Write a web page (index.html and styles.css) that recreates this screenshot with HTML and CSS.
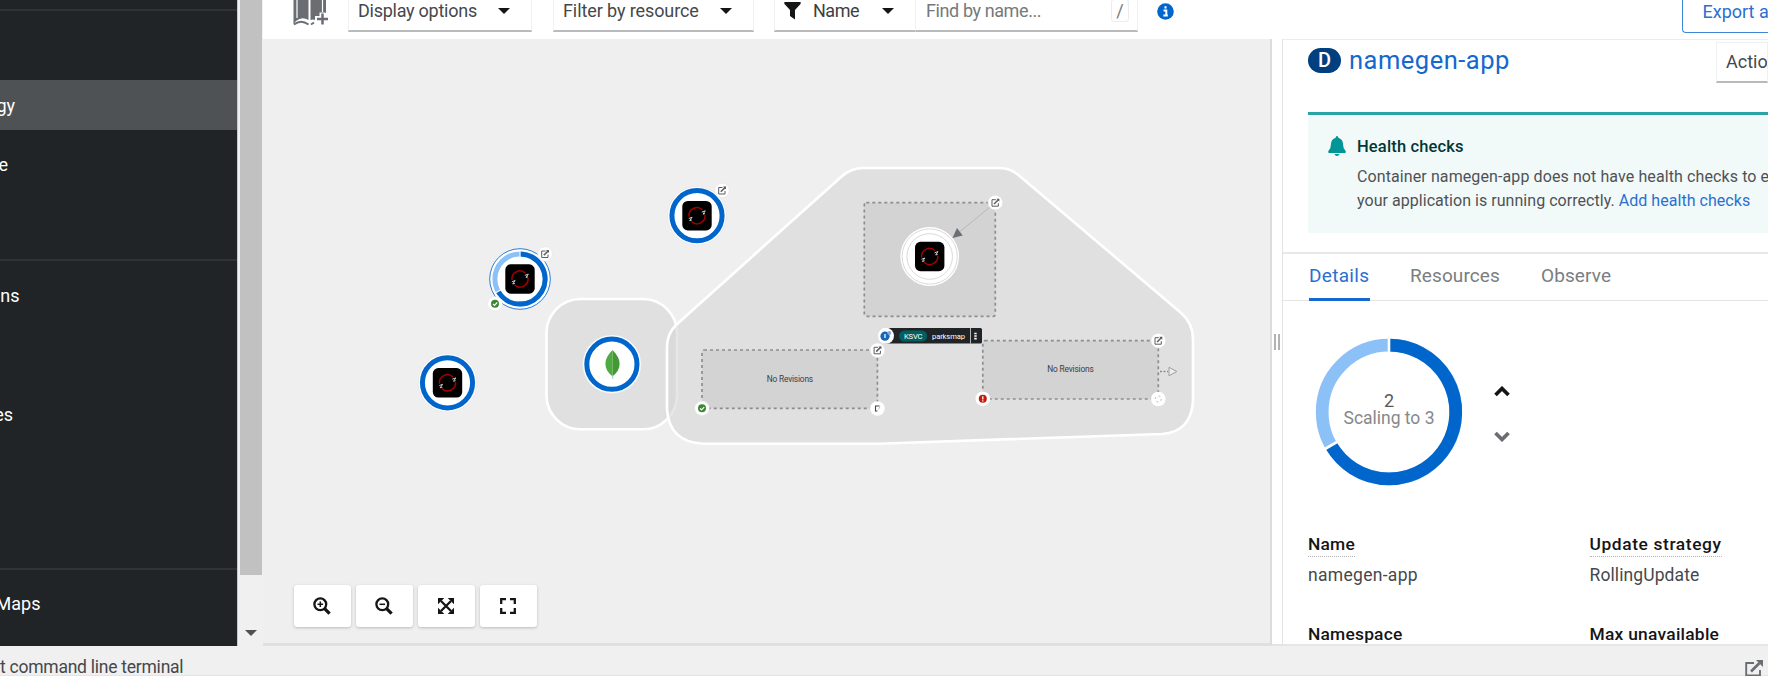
FILE: index.html
```html
<!DOCTYPE html>
<html lang="en">
<head>
<meta charset="utf-8">
<title>Topology</title>
<link rel="stylesheet" href="styles.css">
</head>
<body>
<div class="app">
  <div class="main">
    <nav class="sidebar">
      <div class="nav-group nav-first"></div>
      <div class="nav-group nav-group-top">
        <div class="nav-item active"><span class="w15">gy</span></div>
        <div class="nav-item gap"><span class="w8">e</span></div>
      </div>
      <div class="nav-group nav-group-mid">
        <div class="nav-item"><span class="w20">ns</span></div>
        <div class="nav-item far"><span class="w13">es</span></div>
      </div>
      <div class="nav-group nav-group-end">
        <div class="nav-item"><span class="w40">Maps</span></div>
      </div>
    </nav>
    <div class="scrollbar">
      <div class="thumb"></div>
      <div class="arrow"></div>
    </div>
    <div class="content">
      <header class="toolbar">
        <svg class="catalog" width="35" height="34" viewBox="0 0 35 34">
          <path d="M1 0H12Q15 1 15.500 3V28Q9 24 3 29L.5 32.500V0Z" fill="#6a6e73"/>
          <path d="M17.500 3Q18 1 21 0H33V21H27V24H22V28Q20 27 17.500 28Z" fill="#6a6e73"/>
          <path d="M4 0V26M29.500 0V20" stroke="#fff" stroke-width="1.200"/>
          <path d="M1 32.500Q8 27 15.500 32.500M18 32.500L21 30.500" stroke="#6a6e73" stroke-width="1.800" fill="none"/>
          <path d="M29.500 20.500V33.500M23 27H35" stroke="#fff" stroke-width="6"/>
          <path d="M29.500 21.500V32.500M24 27H35" stroke="#6a6e73" stroke-width="2.500"/>
        </svg>
        <div class="select select-display"><span class="t-display">Display options</span><i class="caret"></i></div>
        <div class="select select-filter"><span class="t-filter">Filter by resource</span><i class="caret"></i></div>
        <div class="select select-name">
          <svg width="17" height="18" viewBox="0 0 17 18"><path d="M.5 0H16.500Q17 1 16.500 2L11 8V17.500L6 14V8L.5 2Q0 1 .5 0Z" fill="#151515"/></svg>
          <span class="t-name">Name</span><i class="caret"></i>
        </div>
        <div class="search"><span class="t-find">Find by name...</span><kbd>/</kbd></div>
        <svg class="info" width="17" height="17" viewBox="0 0 17 17"><circle cx="8.500" cy="8.500" r="8.300" fill="#06c"/><path d="M8.500 3.200V5.600M6.500 7.400H9.300V12M6.300 12.500H10.800" stroke="#fff" stroke-width="2" fill="none"/></svg>
        <div class="export"><span>Export ap</span></div>
      </header>
      <div class="workspace">
        <section class="canvas">
          <svg class="graph" width="1007" height="607" viewBox="263 39 1007 607">
            <defs>
              <g id="shift">
                <rect x="-14.700" y="-14.700" width="29.400" height="29.400" rx="5.500" fill="#000"/>
                <path d="M-8 1A8 8 0 0 1 5.500-5.800M8-1A8 8 0 0 1-5.500 5.800" fill="none" stroke="#a30000" stroke-width="1.500"/>
                <path d="M4.800-3.600L8.300-4.900L6-1.500L8-2.200M-8.200 2.800L-4.900 1.500L-7.300 5L-5.100 4.300" fill="none" stroke="#ccc" stroke-width="1"/>
              </g>
              <g id="ring">
                <circle r="29.300" fill="#fff" stroke="#e2e2e2" stroke-width=".6"/>
                <circle r="25.100" fill="#fff" stroke="#06c" stroke-width="5"/>
              </g>
              <g id="edit">
                <circle r="7.300" fill="#fff" stroke="#e0e0e0" stroke-width=".5"/>
                <path d="M.5-3H-3.300V3.500H3V.5" fill="none" stroke="#5b5e61" stroke-width="1"/>
                <path d="M-1.200 1.300L3.500-3.400" stroke="#5b5e61" stroke-width="1.500"/>
                <path d="M1-3.900H4V-1Z" fill="#5b5e61"/>
              </g>
              <g id="ok">
                <circle r="7.300" fill="#fff" stroke="#e0e0e0" stroke-width=".5"/>
                <circle r="4" fill="#3e8635"/>
                <path d="M-2 .1L-.5 1.600L2.200-1.200" fill="none" stroke="#fff" stroke-width="1.200"/>
              </g>
            </defs>

            <rect x="546.500" y="299" width="130.500" height="130.300" rx="34" fill="#e0e0e0" stroke="#fff" stroke-width="2.600"/>
            <path d="M676 325L841 177Q851 168 863 168H1000Q1010 168 1019 175.500L1180 312Q1193 323 1193 339V401Q1191 432 1162 434L878 443.700H703Q669 442 667 409V347Q667 334 676 325Z" fill="#d6d6d6" fill-opacity=".6" stroke="#fff" stroke-width="2.600"/>

            <g class="revision">
              <rect x="864.300" y="202.700" width="131" height="113.600" rx="2"/>
              <rect x="702" y="350" width="175.400" height="58.300" rx="2"/>
              <rect x="982.800" y="340.700" width="175.500" height="58.300" rx="2"/>
            </g>
            <text class="rev-text" x="766.700" y="381.500" textLength="46.500">No Revisions</text>
            <text class="rev-text" x="1047.300" y="372.300" textLength="46.500">No Revisions</text>

            <use href="#ring" x="697" y="215.700"/><use href="#shift" x="697" y="215.700"/><use href="#edit" x="722" y="190.500"/>
            <g transform="translate(520 279)">
              <circle r="30.300" fill="#fff" stroke="#2b7fd3"/>
              <circle r="25.100" fill="#fff" stroke="#8bc1f7" stroke-width="5"/>
              <path d="M.4-25.100A25.100 25.100 0 1 1-21.500 13" fill="none" stroke="#06c" stroke-width="5"/>
              <path d="M0-22V-28M-18.800 10.600L-24.300 13.700" stroke="#fff" stroke-width="1"/>
              <use href="#shift"/><use href="#edit" x="25" y="-25"/><use href="#ok" x="-25" y="24.700"/>
            </g>
            <use href="#ring" x="447.500" y="382.800"/><use href="#shift" x="447.500" y="382.800"/>
            <use href="#ring" x="611.900" y="364.200"/>
            <path d="M612.500 350C603 359 603 369 612.500 376.500Z" fill="#4faa41"/>
            <path d="M612.500 350C622 359 622 369 612.500 376.500Z" fill="#439934"/>
            <path d="M612.700 375V379" stroke="#b8c4c2"/>

            <g transform="translate(929.700 256.500)">
              <circle r="29.400" fill="#fff"/>
              <circle r="27.600" fill="none" stroke="#dadada"/>
              <circle r="22.800" fill="none" stroke="#dadada"/>
              <use href="#shift"/>
            </g>
            <path d="M990 207L957 234" stroke="#b8b8b8"/>
            <path d="M952.500 238L957 228L962.700 235.500Z" fill="#6a6e73"/>
            <use href="#edit" x="995.300" y="202.700"/>
            <use href="#edit" x="877.400" y="350.300"/>
            <use href="#edit" x="1158.300" y="340.700"/>
            <use href="#ok" x="702" y="408.300"/>
            <g fill="#fff"><circle cx="982.800" cy="398.700" r="7.300"/><circle cx="1158.300" cy="399" r="7.300"/><circle cx="877.400" cy="408.500" r="7.300"/></g>
            <circle cx="982.800" cy="398.700" r="4" fill="#c9190b"/>
            <path d="M982.800 396.200V399.500M982.800 400.200V401.500" stroke="#fff" stroke-width="1.300"/>
            <circle cx="1158.300" cy="399" r="3" fill="none" stroke="#aaa" stroke-width=".9" stroke-dasharray="1.800 2.900"/>
            <path d="M879.500 406H875.500V411H877.500" fill="none" stroke="#444" stroke-width="1.100"/>
            <path d="M878.500 409.500L880 406.500" stroke="#e39a9a" stroke-width=".8"/>

            <path d="M1160 371.500H1168" stroke="#8a8d90" stroke-width="1.500" stroke-dasharray="2 1.500"/>
            <path d="M1169 367.300V375.800L1176.800 371.500Z" fill="#eee" stroke="#9a9c9e"/>

            <rect x="884" y="328" width="98" height="15.600" rx="1.500" fill="#212427"/>
            <rect x="899" y="330.500" width="28.200" height="11" rx="5.500" fill="#005f60"/>
            <text class="ksvc" x="904" y="338.600" textLength="18.500">KSVC</text>
            <text class="ksvc" x="932" y="338.600" textLength="33">parksmap</text>
            <path d="M970.500 328V343.600" stroke="#ddd" stroke-width=".8"/>
            <path d="M974.300 333.500H976.700M974.300 336H976.700M974.300 338.600H976.700" stroke="#fff" stroke-width="1.600"/>
            <circle cx="886" cy="335.800" r="8" fill="#fff"/>
            <circle cx="885" cy="336.200" r="4.600" fill="#1667b5"/>
            <circle cx="889.300" cy="333" r="2" fill="#8aa9dc"/>
            <path d="M885 334V338" stroke="#fff" stroke-width="1.300"/>
          </svg>
          <div class="controls">
            <button><svg width="18" height="18" viewBox="0 0 18 18"><circle cx="7.300" cy="7.300" r="5.900" class="ln"/><path class="ln thick" d="M11.600 11.600L16.600 16.600"/><path class="ln thin" d="M7.300 4.500V10.100M4.500 7.300H10.100"/></svg></button>
            <button><svg width="18" height="18" viewBox="0 0 18 18"><circle cx="7.300" cy="7.300" r="5.900" class="ln"/><path class="ln thick" d="M11.600 11.600L16.600 16.600"/><path class="ln thin" d="M4.500 7.300H10.100"/></svg></button>
            <button><svg width="18" height="18" viewBox="0 0 18 18"><path class="ln" d="M4 4L14 14M14 4L4 14"/><path d="M1 1H7.300L1 7.300ZM17 1V7.300L10.700 1ZM1 17V10.700L7.300 17ZM17 17H10.700L17 10.700Z" fill="#151515"/></svg></button>
            <button><svg width="18" height="18" viewBox="0 0 18 18"><path class="ln" d="M2.200 7V2.200H7M11 2.200H15.800V7M15.800 11V15.800H11M7 15.800H2.200V11"/></svg></button>
          </div>
        </section>
        <div class="splitter"><i></i><i></i></div>
        <aside class="panel">
          <div class="panel-head">
            <span class="badge">D</span>
            <h1>namegen-app</h1>
            <div class="actions"><span>Action</span></div>
          </div>
          <div class="alert">
            <svg width="18" height="20" viewBox="0 0 18 20"><path d="M9 0Q10.300 0 10.300 1.700Q14.800 3 15 8Q15 12.500 17.600 15Q18.200 16.800 17 17H1Q-.2 16.800.4 15Q3 12.500 3 8Q3.200 3 7.700 1.700Q7.700 0 9 0ZM6.500 18H11.500Q11 20 9 20Q7 20 6.500 18Z" fill="#009596"/></svg>
            <div>
              <h2>Health checks</h2>
              <p class="a1">Container namegen-app does not have health checks to e</p>
              <p class="a2">your application is running correctly. <a>Add health checks</a></p>
            </div>
          </div>
          <div class="tabs">
            <span class="tab current">Details</span>
            <span class="tab tab-res">Resources</span>
            <span class="tab tab-obs">Observe</span>
          </div>
          <div class="scaling">
            <svg class="donut" width="148" height="148" viewBox="-74 -74 148 148">
              <circle r="66.800" fill="none" stroke="#8bc1f7" stroke-width="12.700"/>
              <path d="M0-66.800A66.800 66.800 0 1 1-57.900 33.400" fill="none" stroke="#06c" stroke-width="12.700"/>
              <path d="M0-58V-75M-50.300 29L-65 37.500" stroke="#fff" stroke-width="2.600"/>
              <text class="count" x="0" y="-5" text-anchor="middle">2</text>
              <text class="state" x="-45.500" y="12.300" textLength="91">Scaling to 3</text>
            </svg>
            <div class="steps">
              <svg width="16" height="11" viewBox="0 0 16 11"><path d="M1.500 9L8 2.500L14.500 9" fill="none" stroke="#151515" stroke-width="3.700"/></svg>
              <svg width="16" height="11" viewBox="0 0 16 11"><path d="M1.500 2L8 8.500L14.500 2" fill="none" stroke="#6a6e73" stroke-width="3.700"/></svg>
            </div>
          </div>
          <dl class="details">
            <div><dt class="dotted d1">Name</dt><dd class="v1">namegen-app</dd></div>
            <div><dt class="dotted d2">Update strategy</dt><dd class="v2">RollingUpdate</dd></div>
            <div><dt class="d3">Namespace</dt></div>
            <div><dt class="d4">Max unavailable</dt></div>
          </dl>
        </aside>
      </div>
    </div>
  </div>
  <footer class="terminal">
    <span>t command line terminal</span>
    <svg width="18" height="17" viewBox="0 0 18 17"><path d="M9 3H1.200V15.500H15V10" fill="none" stroke="#6a6e73" stroke-width="1.900"/><path d="M6 11.500L14.500 3" stroke="#6a6e73" stroke-width="2.600"/><path d="M11 0H18V7Z" fill="#6a6e73"/></svg>
  </footer>
</div>
</body>
</html>
```

FILE: styles.css
```css
* { box-sizing: border-box; }
body { margin: 0; font-family: Roboto, "Liberation Sans", sans-serif; font-size: 18px; color: #45484b; }
h1, h2, p, dl, dt, dd { margin: 0; font-weight: 400; }
span, h1, h2, p, dt, dd { white-space: nowrap; }
.app { width: 1768px; height: 676px; overflow: hidden; background: #f0f0f0; display: flex; flex-direction: column; }
.main { height: 646px; display: flex; }

.sidebar { width: 238px; background: #212427; color: #fff; overflow: hidden; border-right: 1px solid #c8c8c8; }
.nav-group { border-bottom: 2px solid #303336; }
.nav-first { height: 11px; }
.nav-group-top { height: 250px; padding-top: 69px; }
.nav-group-mid { height: 309px; padding-top: 10px; }
.nav-group-end { border: 0; padding-top: 9px; }
.nav-item { height: 49px; display: flex; align-items: center; }
.nav-item span { display: flex; justify-content: flex-end; }
.nav-item.active { height: 50px; padding-top: 1px; background: #4f5255; }
.nav-item.gap { margin-top: 10px; }
.nav-item.far { margin-top: 70px; }
.w15 { width: 15px; }
.w8 { width: 8px; }
.w20 { width: 19.500px; }
.w13 { width: 13px; }
.w40 { width: 40.500px; }

.scrollbar { width: 25px; background: #f0f0f0; display: flex; flex-direction: column; align-items: center; justify-content: space-between; }
.thumb { width: 22px; height: 575px; background: #c1c1c1; }
.arrow { margin-bottom: 10px; border: 6px solid transparent; border-top-color: #505050; border-bottom: 0; }

.content { width: 1505px; display: flex; flex-direction: column; }
.toolbar { height: 47px; margin-top: -8px; flex: none; background: #fff; padding-left: 30px; display: flex; overflow: hidden; }
.catalog { flex: none; }
.select, .search { height: 40px; flex: none; padding-bottom: 2px; border: 1px solid #f0f0f0; border-bottom: 2px solid #b8babc; display: flex; align-items: center; justify-content: space-between; }
.select-display { width: 184px; margin-left: 20px; padding-left: 9px; padding-right: 21px; }
.select-filter { width: 201px; margin-left: 21px; padding-left: 9px; padding-right: 21px; }
.select-name { width: 142px; margin-left: 20px; padding-left: 9px; padding-right: 21px; justify-content: flex-start; color: #151515; }
.select-name .caret { margin-left: auto; }
.t-display { letter-spacing: -.25px; }
.t-filter { letter-spacing: -.1px; }
.t-name { margin-left: 12px; letter-spacing: -.5px; color: #3c3f42; }
.t-find { letter-spacing: -.4px; }
.search { width: 222px; padding-left: 10px; padding-right: 8px; border-left: 0; color: #75797d; }
.caret { border: 6px solid transparent; border-top-color: #151515; border-bottom: 0; }
kbd { font: inherit; width: 18px; height: 23px; line-height: 21px; text-align: center; border: 1px solid #ececec; border-radius: 3px; }
.info { margin: 10.500px 0 0 19px; flex: none; }
.export { margin-left: auto; flex: none; width: 86.500px; height: 41px; padding: 0 0 3px 20px; border: 1.500px solid #3c87d6; border-right: 0; border-radius: 4px 0 0 4px; color: #2b6fd0; display: flex; align-items: center; overflow: hidden; }

.workspace { height: 607px; display: flex; }
.canvas { width: 1007px; background: #efefef; position: relative; border-bottom: 3px solid #e0e0e0; }
.graph { display: block; }
.revision rect { fill: #d3d3d3; stroke: #8c8e90; stroke-width: 1.700; stroke-dasharray: 3 3; }
.rev-text { font-size: 8.400px; fill: #3c3f42; }
.ksvc { font-size: 7.600px; fill: #fff; }
.controls { position: absolute; left: 30.500px; bottom: 16px; display: flex; gap: 5px; }
.controls button { width: 57px; height: 42px; padding: 0; border: 0; border-radius: 3px; background: #fff; box-shadow: 0 1px 3px #bbb; display: flex; align-items: center; justify-content: center; }
.ln { fill: none; stroke: #151515; stroke-width: 2.300; }
.thick { stroke-width: 3.200; }
.thin { stroke-width: 1.500; }

.splitter { width: 13px; background: #fff; border-left: 2px solid #dcdcdc; border-right: 1px solid #e3e3e3; border-bottom: 2px solid #e3e3e3; display: flex; justify-content: center; align-items: center; gap: 2px; }
.splitter i { width: 2px; height: 16px; background: #b0b2b4; }
.panel { width: 485px; background: #fff; overflow: hidden; border-top: 1px solid #ececec; border-bottom: 2px solid #e6e6e6; }
.panel-head { height: 72px; padding-left: 25px; display: flex; align-items: flex-start; }
.badge { width: 33px; height: 25px; margin-top: 8px; border-radius: 13px; background: #004080; color: #fff; font-size: 20px; font-weight: 500; line-height: 25px; text-align: center; }
h1 { margin: 3px 0 0 8px; font-size: 25.500px; letter-spacing: .5px; line-height: 34px; color: #1568cf; }
.actions { margin: 2px 0 0 auto; width: 52px; height: 41px; padding: 0 0 2px 9px; border: 1px solid #f0f0f0; border-bottom: 2px solid #b8babc; display: flex; align-items: center; overflow: hidden; }
.alert { height: 121px; margin-left: 25px; padding: 21px 0 0 20px; background: #f2f9f9; border-top: 3px solid #2aa5a5; display: flex; gap: 11px; overflow: hidden; }
.alert svg { flex: none; }
.alert h2 { font-size: 16.500px; letter-spacing: .15px; line-height: 24px; font-weight: 500; color: #003737; }
.alert div { margin-top: -1px; }
.alert p { font-size: 16px; line-height: 24px; color: #4f5255; }
.alert .a1 { margin-top: 6px; letter-spacing: .1px; }
.alert .a2 { letter-spacing: .04px; }
.alert a { color: #2b6fd0; }
.tabs { margin-top: 19px; height: 49px; padding-left: 26px; border-top: 2px solid #e8e8e8; border-bottom: 1px solid #e4e4e4; display: flex; color: #7a7d81; }
.tab { height: 47px; line-height: 43px; font-size: 19px; letter-spacing: .1px; }
.tab.current { width: 61px; letter-spacing: .3px; color: #2b6fd0; border-bottom: 3px solid #1568cf; }
.tab-res { margin-left: 40px; width: 91px; }
.tab-obs { margin-left: 40px; }
.scaling { height: 222px; padding: 37px 0 0 32px; display: flex; gap: 31px; }
.count { font-size: 18px; fill: #55585c; }
.state { font-size: 17.500px; fill: #85888b; }
.steps { display: flex; flex-direction: column; gap: 34px; padding-top: 48px; }
.details { padding: 9px 0 0 25px; display: grid; grid-template-columns: 281.500px 1fr; grid-template-rows: 90px 30px; }
.details dt { width: max-content; font-size: 17.400px; line-height: 24px; font-weight: 500; color: #151515; }
.details dt.dotted { border-bottom: 1.500px dotted #b0b2b4; }
.details .d1 { letter-spacing: .2px; }
.details .d2 { letter-spacing: .6px; }
.details .d3 { letter-spacing: .2px; }
.details .d4 { letter-spacing: .25px; }
.details dd { margin-top: 6px; line-height: 24px; font-size: 17.500px; }
.details .v1 { letter-spacing: .3px; }
.details .v2 { letter-spacing: .1px; }

.terminal { height: 30px; padding: 0 5px 0 0; display: flex; justify-content: space-between; border-bottom: 1px solid #e4e4e4; }
.terminal span { line-height: 43px; font-size: 17.500px; letter-spacing: -.25px; }
.terminal svg { margin-top: 14px; }
```
